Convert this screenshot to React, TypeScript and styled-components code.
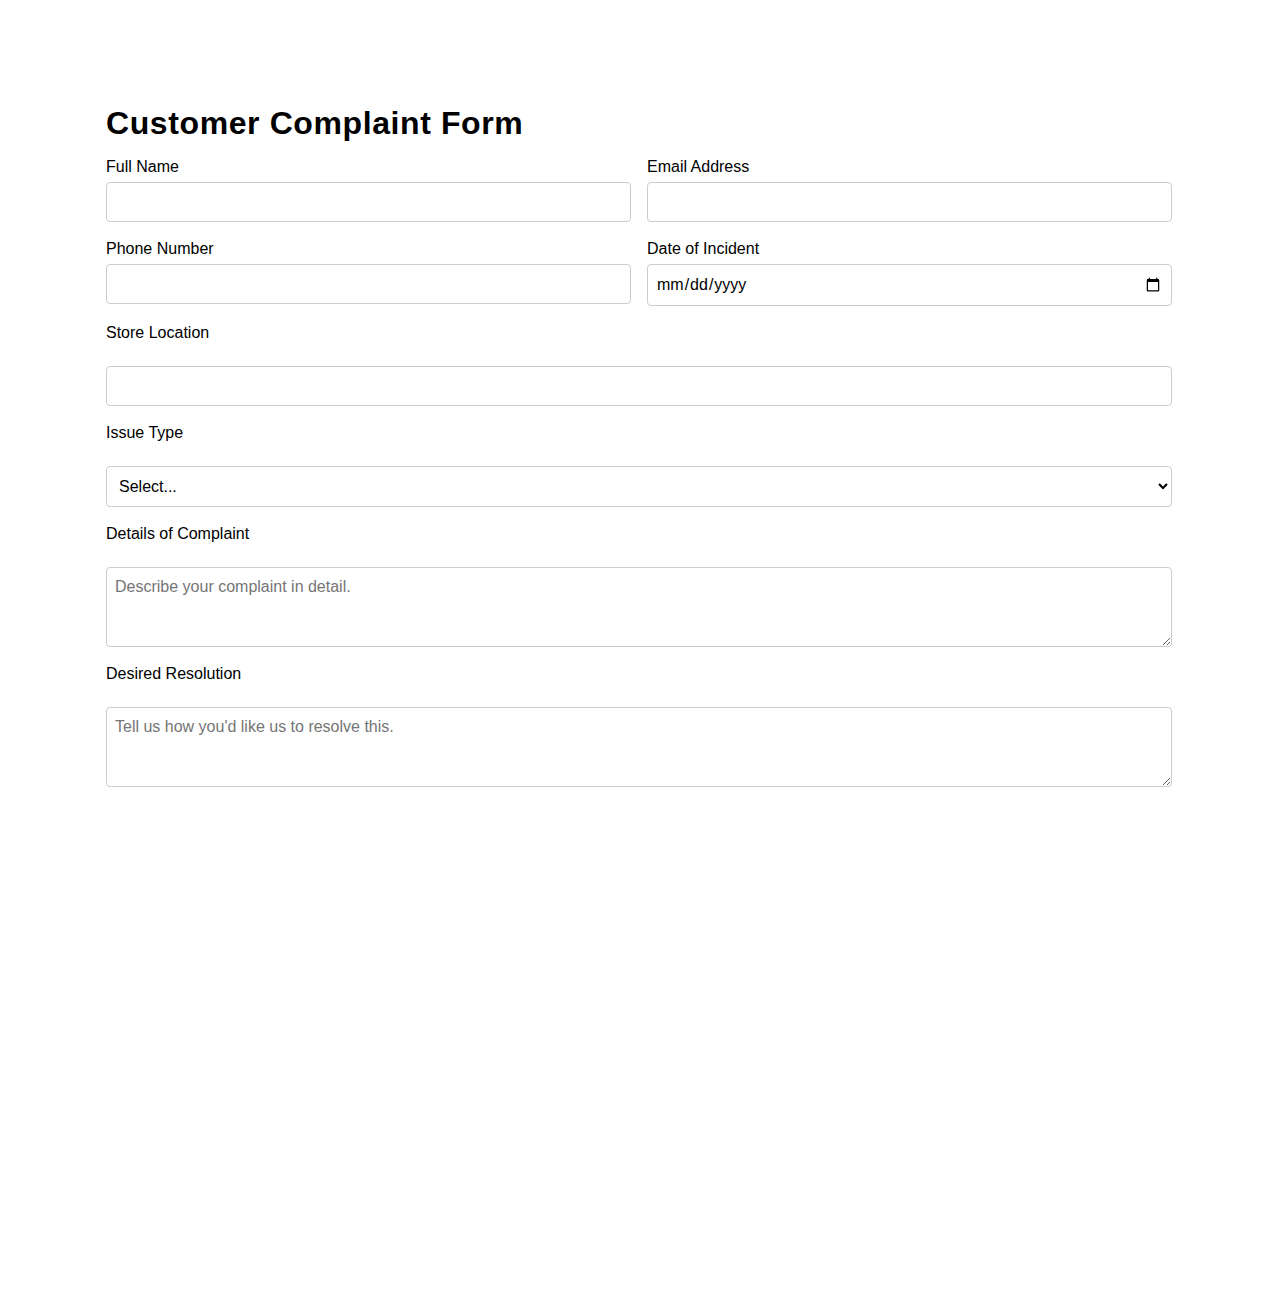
import React from "react";
import styled, { createGlobalStyle } from "styled-components";

const GlobalStyle = createGlobalStyle`
  html, body {
    margin: 0;
    padding: 0;
    background: #ffffff;
  }
  body {
    font-family: "Liberation Sans", Arial, sans-serif;
    color: #000;
  }
  * { box-sizing: border-box; }
`;

const Page = styled.main`
  max-width: 1066px;
  margin: 0 auto;
  padding-top: 105px;
  padding-bottom: 40px;
`;

const Title = styled.h1`
  margin: 0 0 16px;
  font-size: 32px;
  font-weight: 700;
  letter-spacing: 0.6px;
  line-height: normal;
  color: #000;
`;

const Form = styled.form`
  display: flex;
  flex-direction: column;
  gap: 18px;
`;

const Row = styled.div`
  display: grid;
  grid-template-columns: 1fr 1fr;
  column-gap: 16px;
  align-items: start;
`;

const Field = styled.div`
  display: flex;
  flex-direction: column;
`;

const Label = styled.label<{ $wide?: boolean }>`
  display: block;
  font-size: 16px;
  line-height: 18px;
  color: #000;
  margin-bottom: ${(p) => (p.$wide ? "24px" : "6px")};
`;

const fieldBase = `
  width: 100%;
  font-family: "Liberation Sans", Arial, sans-serif;
  font-size: 16px;
  color: #000;
  background: #fff;
  border: 1px solid #cccccc;
  border-radius: 4px;
  outline: none;
`;

const Input = styled.input`
  ${fieldBase}
  height: 40px;
  padding: 10px 8px;
`;

const DateInput = styled.input`
  ${fieldBase}
  height: 42px;
  padding: 10px 8px;
`;

const Select = styled.select`
  ${fieldBase}
  height: 41px;
  padding: 8px;
`;

const TextArea = styled.textarea`
  ${fieldBase}
  height: 80px;
  padding: 10px 8px 8px;
  resize: vertical;
  line-height: normal;
  &::placeholder {
    color: #757575;
  }
`;

export default function App() {
  return (
    <>
      <GlobalStyle />
      <Page>
        <Title>Customer Complaint Form</Title>
        <Form onSubmit={(e) => e.preventDefault()}>
          <Row>
            <Field>
              <Label htmlFor="fullName">Full Name</Label>
              <Input id="fullName" type="text" />
            </Field>
            <Field>
              <Label htmlFor="email">Email Address</Label>
              <Input id="email" type="email" />
            </Field>
          </Row>
          <Row>
            <Field>
              <Label htmlFor="phone">Phone Number</Label>
              <Input id="phone" type="tel" />
            </Field>
            <Field>
              <Label htmlFor="date">Date of Incident</Label>
              <DateInput id="date" type="date" />
            </Field>
          </Row>
          <Field>
            <Label $wide htmlFor="store">Store Location</Label>
            <Input id="store" type="text" />
          </Field>
          <Field>
            <Label $wide htmlFor="issue">Issue Type</Label>
            <Select id="issue" defaultValue="">
              <option value="">Select...</option>
              <option value="product">Product Quality</option>
              <option value="service">Customer Service</option>
              <option value="billing">Billing</option>
              <option value="other">Other</option>
            </Select>
          </Field>
          <Field>
            <Label $wide htmlFor="details">Details of Complaint</Label>
            <TextArea id="details" placeholder="Describe your complaint in detail." />
          </Field>
          <Field>
            <Label $wide htmlFor="resolution">Desired Resolution</Label>
            <TextArea id="resolution" placeholder="Tell us how you'd like us to resolve this." />
          </Field>
        </Form>
      </Page>
    </>
  );
}
